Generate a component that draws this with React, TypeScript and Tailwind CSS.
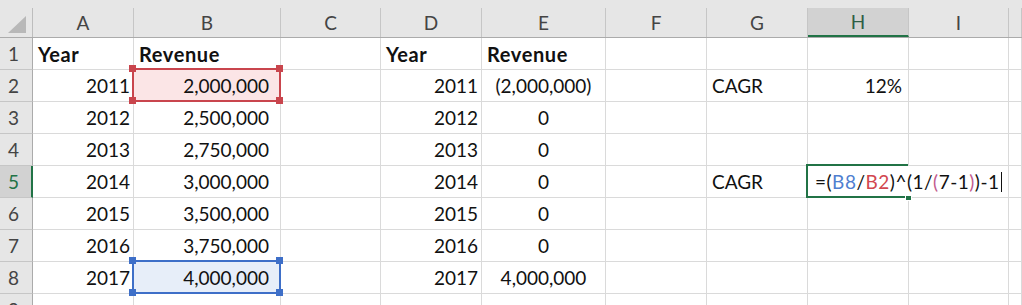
import React from 'react';

const COL_W = [
  'w-[101px]',
  'w-[147px]',
  'w-[100px]',
  'w-[101px]',
  'w-[124px]',
  'w-[101px]',
  'w-[101px]',
  'w-[101px]',
  'w-[100px]',
  'flex-1',
];
const LETTERS = ['A', 'B', 'C', 'D', 'E', 'F', 'G', 'H', 'I', ''];

// per-column alignment for data rows
const ALIGN = [
  'justify-end pr-[3px]',
  'justify-end pr-[11px]',
  'justify-start pl-[5px]',
  'justify-end pr-[3px]',
  'justify-center',
  'justify-start pl-[5px]',
  'justify-start pl-[5px]',
  'justify-end pr-[6px]',
  'justify-start pl-[5px]',
  'justify-start pl-[5px]',
];

const ROWS: string[][] = [
  ['Year', 'Revenue', '', 'Year', 'Revenue', '', '', '', '', ''],
  ['2011', '2,000,000', '', '2011', '(2,000,000)', '', 'CAGR', '12%', '', ''],
  ['2012', '2,500,000', '', '2012', '0', '', '', '', '', ''],
  ['2013', '2,750,000', '', '2013', '0', '', '', '', '', ''],
  ['2014', '3,000,000', '', '2014', '0', '', 'CAGR', '', '', ''],
  ['2015', '3,500,000', '', '2015', '0', '', '', '', '', ''],
  ['2016', '3,750,000', '', '2016', '0', '', '', '', '', ''],
  ['2017', '4,000,000', '', '2017', '4,000,000', '', '', '', '', ''],
  ['', '', '', '', '', '', '', '', '', ''],
];

const Handles = ({ bg }: { bg: string }) => (
  <>
    <div className={`absolute -left-[5px] -top-[5px] w-[7px] h-[7px] z-20 ${bg}`} />
    <div className={`absolute -right-[3px] -top-[5px] w-[7px] h-[7px] z-20 ${bg}`} />
    <div className={`absolute -left-[5px] -bottom-[3px] w-[7px] h-[7px] z-20 ${bg}`} />
    <div className={`absolute -right-[3px] -bottom-[3px] w-[7px] h-[7px] z-20 ${bg}`} />
  </>
);

const Formula = () => (
  <div className="absolute left-[7px] top-0 h-full flex items-center whitespace-nowrap z-30 text-[#111] tracking-[0.5px]">
    <span>=(</span>
    <span className="text-[#4f7fd0]">B8</span>
    <span>/</span>
    <span className="text-[#d2474f]">B2</span>
    <span>)^(1/</span>
    <span className="text-[#c25a8e]">(</span>
    <span>7-1</span>
    <span className="text-[#c25a8e]">)</span>
    <span>)-1</span>
    <span className="inline-block w-[1px] h-[20px] bg-[#111] ml-[1px]" />
  </div>
);

export default function App() {
  return (
    <div
      className="w-[1022px] h-[305px] overflow-hidden bg-white text-[19px] leading-none select-none"
      style={{ fontFamily: 'Lato, "Open Sans", sans-serif' }}
    >
      {/* column headers */}
      <div className="h-[8px] bg-[#e6e6e6]" />
      <div className="flex h-[30px] bg-[#e6e6e6] border-b border-[#ababab]">
        <div className="w-[33px] h-full border-r border-[#bdbdbd] relative">
          <div className="absolute right-[6px] bottom-[4px] w-0 h-0 border-l-[18px] border-l-transparent border-b-[17px] border-b-[#b8b8b8]" />
        </div>
        {LETTERS.map((l, i) => (
          <div
            key={i}
            className={`${COL_W[i]} h-full border-r border-[#c6c6c6] flex items-center justify-center ${
              l === 'H' ? 'bg-[#d2d2d2] text-[#2d5e45] border-b-2 border-b-[#217346]' : 'text-[#444]'
            }`}
          >
            {l}
          </div>
        ))}
      </div>

      {ROWS.map((row, r) => {
        const n = r + 1;
        return (
          <div key={r} className="flex h-[32px]">
            <div
              className={`w-[33px] h-full border-b border-[#c6c6c6] flex items-center pl-[8px] ${
                n === 5
                  ? 'bg-[#d2d2d2] text-[#217346] border-r-2 border-r-[#217346]'
                  : 'bg-[#e6e6e6] text-[#444] border-r border-r-[#ababab]'
              }`}
            >
              {n}
            </div>
            {row.map((v, c) => {
              const isB2 = n === 2 && c === 1;
              const isB8 = n === 8 && c === 1;
              const isH5 = n === 5 && c === 7;
              const bold = n === 1 && v !== '';
              return (
                <div
                  key={c}
                  className={`${COL_W[c]} h-full border-b border-[#dadada] flex items-center text-[#111] ${
                    isH5 ? 'border-r border-r-transparent relative' : 'border-r border-r-[#dadada]'
                  } ${bold ? 'justify-start pl-[5px] font-bold text-[20px] tracking-[0.6px]' : ALIGN[c]} ${
                    isB2 || isB8 ? 'relative' : ''
                  } ${isB2 ? 'bg-[#fbe5e6]' : ''} ${isB8 ? 'bg-[#e7eef9]' : ''}`}
                >
                  <span className="relative z-10">{v}</span>
                  {isB2 && (
                    <>
                      <div className="absolute -left-[2px] -top-[2px] w-[calc(100%+3px)] h-[calc(100%+3px)] border-2 border-[#c9454d] z-10" />
                      <Handles bg="bg-[#c9454d]" />
                    </>
                  )}
                  {isB8 && (
                    <>
                      <div className="absolute -left-[2px] -top-[2px] w-[calc(100%+3px)] h-[calc(100%+3px)] border-2 border-[#3e6fc8] z-10" />
                      <Handles bg="bg-[#3e6fc8]" />
                    </>
                  )}
                  {isH5 && (
                    <>
                      <div className="absolute -left-[2px] -top-[2px] w-[calc(100%+2px)] h-[calc(100%+3px)] border-t-2 border-l-2 border-b-2 border-[#217346] z-20" />
                      <div className="absolute -right-[4px] -bottom-[4px] w-[7px] h-[6px] bg-[#217346] border border-white z-30" />
                      <Formula />
                    </>
                  )}
                </div>
              );
            })}
          </div>
        );
      })}
    </div>
  );
}
